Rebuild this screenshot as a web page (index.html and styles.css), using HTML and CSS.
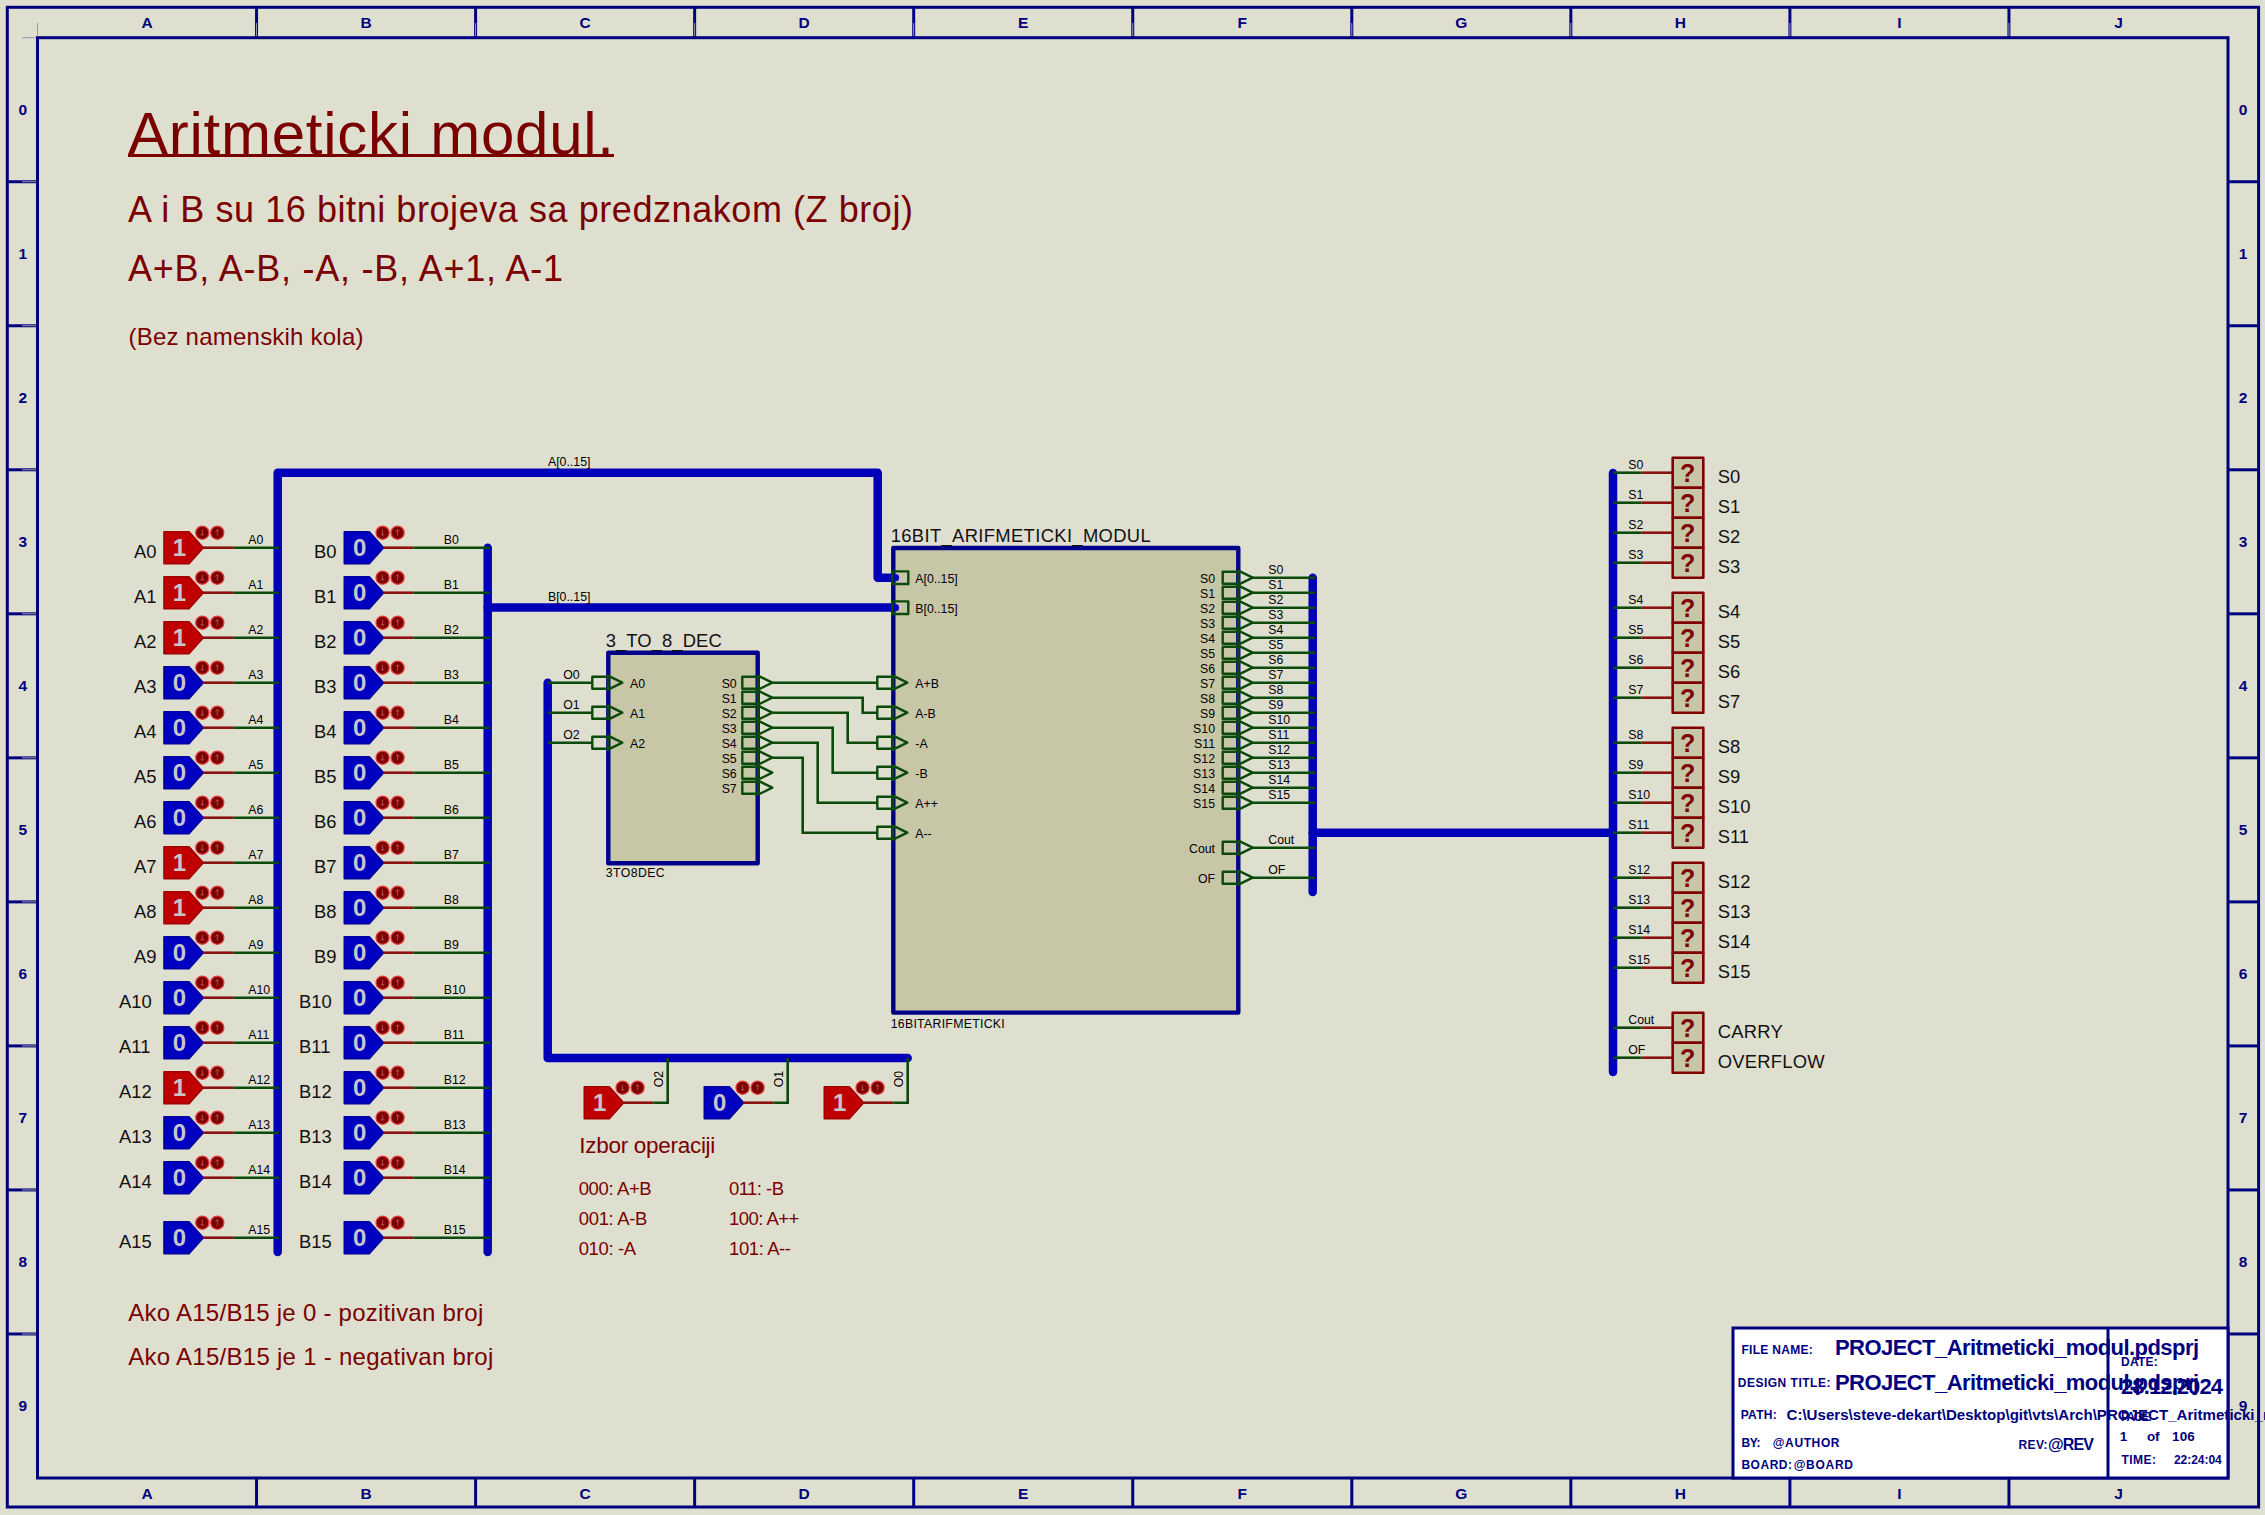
FILE: index.html
```html
<!DOCTYPE html>
<html lang="sr">
<head>
<meta charset="utf-8">
<title>PROJECT_Aritmeticki_modul</title>
<link rel="stylesheet" href="styles.css">
</head>
<body>
<svg id="sheet" class="sheet" xmlns="http://www.w3.org/2000/svg" width="2265" height="1515" viewBox="0 0 2265 1515"></svg>
<script src="app.js"></script>
</body>
</html>
```

FILE: styles.css
```css
html, body { margin: 0; padding: 0; background: #dfdfd0; overflow: hidden; }
.sheet { display: block; font-family: "Liberation Sans", Arial, sans-serif; }
.frame { fill: none; stroke: #00007f; stroke-width: 3; }
.frame-tick { stroke: #00007f; stroke-width: 3; }
.frame-mark { stroke: #9a9ab4; stroke-width: 1; }
.frame-label { fill: #00007f; font-size: 15.5px; font-weight: 700; text-anchor: middle; }
.bus { fill: none; stroke: #0000b8; stroke-width: 8.5; stroke-linejoin: round; stroke-linecap: round; }
.bus-end { fill: #0000b8; }
.wire { fill: none; stroke: #0b4a0b; stroke-width: 2.6; stroke-linejoin: miter; }
.wire-hi { fill: none; stroke: #8c1212; stroke-width: 2.6; }
.block { fill: #c7c7a8; stroke: #00008b; stroke-width: 4.4; stroke-linejoin: round; }
.pin { fill: none; stroke: #0b4a0b; stroke-width: 2.4; stroke-linejoin: round; }
.net { fill: #000; font-size: 12.3px; }
.label { fill: #111; font-size: 18.4px; }
.title-ref { fill: #111; font-size: 18.4px; }
.note { fill: #7a0000; }
.t-title { font-size: 60px; }
.t-big { font-size: 36px; }
.t-mid { font-size: 24px; }
.t-sel { font-size: 22.5px; }
.t-op { font-size: 18.5px; }
.note-rule { stroke: #7a0000; stroke-width: 3; }
.toggle-1 { fill: #c00000; stroke: #a00000; stroke-width: 1.6; stroke-linejoin: round; }
.toggle-0 { fill: #0000c0; stroke: #00009c; stroke-width: 1.6; stroke-linejoin: round; }
.toggle-digit { fill: #c6c6cc; font-size: 24px; font-weight: 700; text-anchor: middle; }
.knob { fill: #7a0000; stroke: #e83c3c; stroke-width: 1.2; }
.knob-arrow { fill: none; stroke: #b84a4a; stroke-width: 1; }
.probe { fill: #c7c7a8; stroke: #800000; stroke-width: 2.6; stroke-linejoin: round; }
.probe-mark { fill: #800000; font-size: 25px; font-weight: 700; text-anchor: middle; }
.tb-box { fill: #fff; stroke: #00007f; stroke-width: 3; }
.tb-line { stroke: #00007f; stroke-width: 3; }
.tb { fill: #00007f; font-weight: 700; }
.tb-s { font-size: 12px; }
.tb-m { font-size: 13.5px; }
.tb-path { font-size: 15.1px; }
.tb-v { font-size: 16px; }
.tb-l { font-size: 22px; }
```

FILE: app.js
```js
const NS = 'http://www.w3.org/2000/svg';
const sheet = document.getElementById('sheet');

function el(tag, cls, attrs) {
  const n = document.createElementNS(NS, tag);
  if (cls) n.setAttribute('class', cls);
  for (const k in attrs) n.setAttribute(k, attrs[k]);
  sheet.appendChild(n);
  return n;
}
function text(s, x, y, cls, w, extra) {
  const attrs = Object.assign({ x, y }, extra || {});
  if (w) attrs.textLength = w;
  const n = el('text', cls, attrs);
  n.textContent = s;
  return n;
}
const path = (d, cls) => el('path', cls, { d });
const line = (x1, y1, x2, y2, cls) => el('line', cls, { x1, y1, x2, y2 });

/* sheet frame */
const L = 7.3, R = 2258.6, T = 7.3, B = 1507, IL = 37.5, IR = 2228, IT = 37.7, IB = 1478;
const COL = (IR - IL) / 10, ROW = (IB - IT) / 10;
el('rect', 'frame', { x: L, y: T, width: R - L, height: B - T });
el('rect', 'frame', { x: IL, y: IT, width: IR - IL, height: IB - IT });
'ABCDEFGHIJ'.split('').forEach((c, i) => {
  const x = IL + COL * i;
  if (i) { line(x, T, x, IT, 'frame-tick'); line(x, IB, x, B, 'frame-tick'); }
  line(x, 23, x, 36, 'frame-mark');
  text(c, x + COL / 2, 27.5, 'frame-label');
  text(c, x + COL / 2, 1498.5, 'frame-label');
});
for (let i = 0; i < 10; i++) {
  const y = IT + ROW * i;
  if (i) { line(L, y, IL, y, 'frame-tick'); line(IR, y, R, y, 'frame-tick'); }
  line(22, y, 36, y, 'frame-mark');
}

/* notes */
text('Aritmeticki modul.', 128, 154, 'note t-title', 486);
line(128, 155.5, 614, 155.5, 'note-rule');
text('A i B su 16 bitni brojeva sa predznakom (Z broj)', 128, 221.7, 'note t-big', 785);
text('A+B, A-B, -A, -B, A+1, A-1', 128, 281.2, 'note t-big', 435);
text('(Bez namenskih kola)', 128.5, 345, 'note t-mid', 235);
text('Ako A15/B15 je 0 - pozitivan broj', 128.3, 1320.7, 'note t-mid', 355);
text('Ako A15/B15 je 1 - negativan broj', 128.3, 1365, 'note t-mid', 365);
text('Izbor operaciji', 579.3, 1152.7, 'note t-sel', 136);
[['000: A+B', 578.7, 1195, 73], ['001: A-B', 578.7, 1225, 68.7], ['010: -A', 578.7, 1255, 57.3],
 ['011: -B', 729, 1195, 55], ['100: A++', 729, 1225, 70.3], ['101: A--', 729, 1255, 62]]
  .forEach(([s, x, y, w]) => text(s, x, y, 'note t-op', w));

/* buses */
path('M277.7 1252V472.7H877.7V577.7H895', 'bus');
path('M487.7 547.7V1252', 'bus');
path('M487.7 607.5H895', 'bus');
path('M547.7 682.7V1058H907.7', 'bus');
path('M1312.7 577.7V892', 'bus');
path('M1312.7 832.7H1613', 'bus');
path('M1613 473V1072', 'bus');

/* logic toggle: body starts at x, wire at y */
function toggle(x, y, v) {
  path(`M${x} ${y - 16}H${x + 25}L${x + 39.3} ${y}L${x + 25} ${y + 16}H${x}Z`, 'toggle-' + v);
  text(String(v), x + 15.5, y + 8.5, 'toggle-digit');
  [[38.3, -1], [53.3, 1]].forEach(([dx, dir]) => {
    const cx = x + dx, cy = y - 15;
    el('circle', 'knob', { cx, cy, r: 6.6 });
    path(`M${cx} ${cy - 3 * dir}V${cy + 3 * dir}M${cx - 1.8} ${cy - 1.2 * dir}L${cx} ${cy - 3 * dir}L${cx + 1.8} ${cy - 1.2 * dir}`, 'knob-arrow');
  });
}
const A = [1, 1, 1, 0, 0, 0, 0, 1, 1, 0, 0, 0, 1, 0, 0, 0];
const rowY = i => 547.7 + 45 * i + (i === 15 ? 15 : 0);
for (let i = 0; i < 16; i++) {
  const y = rowY(i), wide = i > 9;
  toggle(164, y, A[i]);
  toggle(344.3, y, 0);
  line(203, y, 233.3, y, 'wire-hi');
  line(233.3, y, 279, y, 'wire');
  line(383.5, y, 413.3, y, 'wire-hi');
  line(413.3, y, 490, y, 'wire');
  text('A' + i, wide ? 119 : 134, y + 10, 'label');
  text('B' + i, wide ? 299 : 314, y + 10, 'label');
  text('A' + i, 248.3, y - 3.7, 'net');
  text('B' + i, 443.7, y - 3.7, 'net');
}

/* selector toggles */
[[584.3, 653.3, 667.7, 1, 'O2'], [704.3, 773.3, 787.7, 0, 'O1'], [824.3, 893.3, 907.7, 1, 'O0']]
  .forEach(([x, r, g, v, name]) => {
    const y = 1102.7;
    toggle(x, y, v);
    line(x + 39, y, r, y, 'wire-hi');
    path(`M${r} ${y}H${g}V1058`, 'wire');
    text(name, 0, 0, 'net', 0, { transform: `translate(${g - 4.4} 1087.3) rotate(-90)` });
  });

/* sub-circuit blocks */
el('rect', 'block', { x: 608.3, y: 652.7, width: 149.4, height: 210.6 });
el('rect', 'block', { x: 893.3, y: 548, width: 345, height: 464.6 });
text('3_TO_8_DEC', 605.7, 646.7, 'title-ref', 116);
text('3TO8DEC', 605.7, 877, 'net', 59);
text('16BIT_ARIFMETICKI_MODUL', 890.7, 541.7, 'title-ref', 260);
text('16BITARIFMETICKI', 890.7, 1027.5, 'net', 114);

/* pins */
function inPin(x, y) {
  path(`M${x + 15.7} ${y - 6}H${x}V${y + 6}H${x + 15.7}M${x + 15.7} ${y - 7}V${y + 7}L${x + 30} ${y}Z`, 'pin');
}
function busPin(y) {
  el('circle', 'bus-end', { cx: 895.5, cy: y, r: 3.6 });
  path(`M892.3 ${y - 6.3}H908.3V${y + 6.3}H892.3Z`, 'pin');
}
function pinLabel(s, x, y) { text(s, x, y + 5, 'net'); }
function pinLabelEnd(s, x, y) { text(s, x, y + 5, 'net', 0, { 'text-anchor': 'end' }); }

/* decoder */
['A0', 'A1', 'A2'].forEach((s, i) => {
  const y = 682.7 + 30 * i;
  line(547.7, y, 592.3, y, 'wire');
  inPin(592.3, y);
  pinLabel(s, 630, y);
  text('O' + i, 563.3, y - 3.7, 'net');
});
for (let i = 0; i < 8; i++) {
  const y = 682.7 + 15 * i;
  inPin(742.3, y);
  pinLabelEnd('S' + i, 736.7, y);
}

/* decoder to module wiring */
const routes = [[null], [862.7], [847.7], [832.7], [817.7], [802.7]];
['A+B', 'A-B', '-A', '-B', 'A++', 'A--'].forEach((s, i) => {
  const from = 682.7 + 15 * i, to = 682.7 + 30 * i, bend = routes[i][0];
  path(bend ? `M772.3 ${from}H${bend}V${to}H877.3` : `M772.3 ${from}H877.3`, 'wire');
  inPin(877.3, to);
  pinLabel(s, 915.3, to);
});

/* module bus pins */
busPin(577.7); pinLabel('A[0..15]', 915.3, 577.7);
busPin(607.7); pinLabel('B[0..15]', 915.3, 607.7);
text('A[0..15]', 548, 466, 'net');
text('B[0..15]', 548, 600.7, 'net');

/* module outputs */
const outs = [];
for (let i = 0; i < 16; i++) outs.push(['S' + i, 577.7 + 15 * i]);
outs.push(['Cout', 847.7], ['OF', 877.7]);
outs.forEach(([s, y]) => {
  line(1252, y, 1315, y, 'wire');
  inPin(1222.7, y);
  pinLabelEnd(s, 1215, y);
  text(s, 1268.3, y - 3.7, 'net');
});

/* logic probes */
function probe(net, name, y, w) {
  line(1613, y, 1641.7, y, 'wire');
  line(1641.7, y, 1672.7, y, 'wire-hi');
  el('rect', 'probe', { x: 1672.7, y: y - 15, width: 30.6, height: 30 });
  text('?', 1687.7, y + 9.6, 'probe-mark');
  text(net, 1628.3, y - 3.7, 'net');
  text(name, 1717.7, y + 10, 'label', w);
}
for (let g = 0; g < 4; g++) {
  for (let i = 0; i < 4; i++) {
    const n = g * 4 + i, y = 472.7 + g * 135 + i * 30;
    probe('S' + n, 'S' + n, y);
  }
}
probe('Cout', 'CARRY', 1027.7, 65);
probe('OF', 'OVERFLOW', 1057.7, 107);

/* title block */
el('rect', 'tb-box', { x: 1733, y: 1328, width: 495, height: 150 });
line(2108, 1328, 2108, 1478, 'tb-line');
[['FILE NAME:', 1741.4, 1354, 'tb-s', 71.4],
 ['PROJECT_Aritmeticki_modul.pdsprj', 1835, 1355, 'tb-l', 364],
 ['DESIGN TITLE:', 1737.8, 1386.7, 'tb-s', 92.6],
 ['PROJECT_Aritmeticki_modul.pdsprj', 1835, 1390, 'tb-l', 364],
 ['PATH:', 1740.7, 1419.3, 'tb-s', 36],
 ['C:\\Users\\steve-dekart\\Desktop\\git\\vts\\Arch\\PROJECT_Aritmeticki_modul.pdsprj', 1786.5, 1420, 'tb-path'],
 ['BY:', 1741.4, 1447.3, 'tb-s', 19],
 ['@AUTHOR', 1772.8, 1447.3, 'tb-s', 66.7],
 ['REV:', 2018.6, 1449.3, 'tb-s', 29],
 ['@REV', 2048, 1450, 'tb-v', 46],
 ['BOARD:', 1741.4, 1469.3, 'tb-s', 50.6],
 ['@BOARD', 1793.7, 1469.3, 'tb-s', 59.3],
 ['DATE:', 2121, 1365.7, 'tb-s', 36.7],
 ['28.12.2024', 2121, 1394.3, 'tb-l', 102],
 ['PAGE:', 2121, 1420.7, 'tb-s', 31],
 ['1', 2119.8, 1440.7, 'tb-m'],
 ['of', 2146.9, 1440.7, 'tb-m', 12.6],
 ['106', 2172, 1440.7, 'tb-m', 22.8],
 ['TIME:', 2121.6, 1464, 'tb-s', 34.3],
 ['22:24:04', 2173.9, 1464, 'tb-s', 47.9]]
  .forEach(([s, x, y, size, w]) => text(s, x, y, 'tb ' + size, w));

/* row labels sit above the title block */
for (let i = 0; i < 10; i++) {
  const y = IT + ROW * i + 77;
  text(String(i), 22.7, y, 'frame-label');
  text(String(i), 2243, y, 'frame-label');
}
```
